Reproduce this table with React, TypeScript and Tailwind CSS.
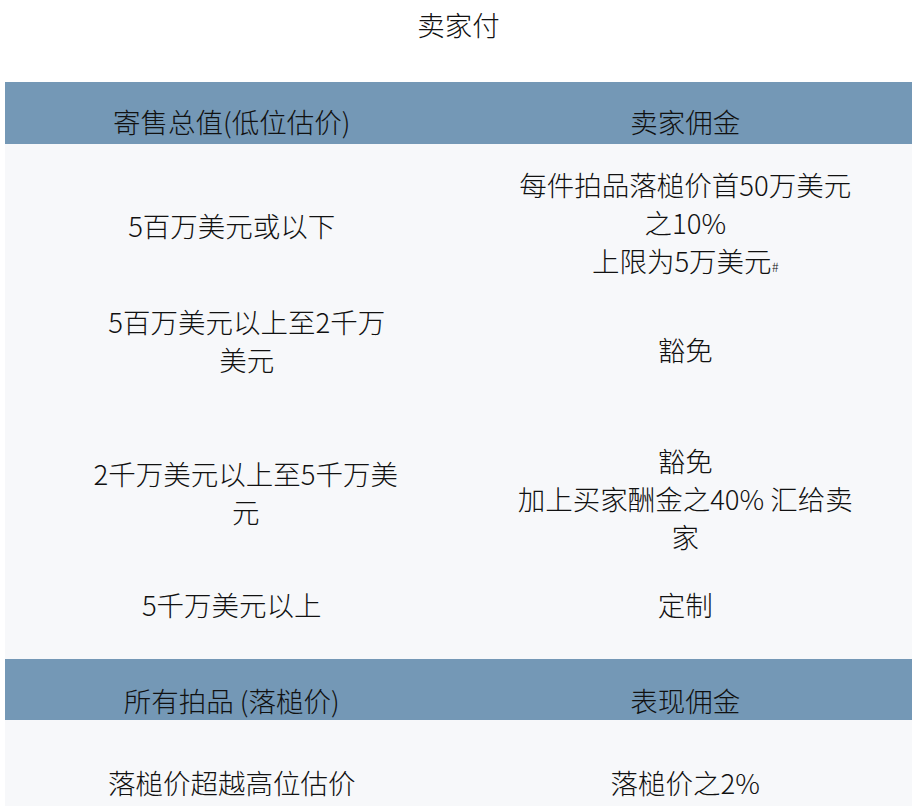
const FONT = "font-['Noto_Sans_CJK_SC','Noto_Sans',sans-serif]";

type Row = {
  h: string;
  leftPt: string;
  rightPt: string;
  left: string[];
  right: string[];
  hashOnLast?: boolean;
};

const ROWS: Row[] = [
  {
    h: "h-[146px]",
    leftPt: "pt-[62px]",
    rightPt: "pt-[21px]",
    left: ["5百万美元或以下"],
    right: ["每件拍品落槌价首50万美元", "之10%", "上限为5万美元"],
    hashOnLast: true,
  },
  {
    h: "h-[131px]",
    leftPt: "pt-[12px] pl-[30px]",
    rightPt: "pt-[40px]",
    left: ["5百万美元以上至2千万", "美元"],
    right: ["豁免"],
  },
  {
    h: "h-[145px]",
    leftPt: "pt-[33px] pl-[28px]",
    rightPt: "pt-[20px]",
    left: ["2千万美元以上至5千万美", "元"],
    right: ["豁免", "加上买家酬金之40% 汇给卖", "家"],
  },
  {
    h: "h-[93px]",
    leftPt: "pt-[19px]",
    rightPt: "pt-[19px]",
    left: ["5千万美元以上"],
    right: ["定制"],
  },
];

function Lines({ lines, hash }: { lines: string[]; hash?: boolean }) {
  return (
    <div className="text-center whitespace-nowrap">
      {lines.map((l, i) => (
        <div key={i}>
          {l}
          {hash && i === lines.length - 1 && <span className="text-[13px] align-baseline">#</span>}
        </div>
      ))}
    </div>
  );
}

function HeaderRow({ left, right, h, pt }: { left: string; right: string; h: string; pt: string }) {
  return (
    <div className={`grid grid-cols-2 bg-[#7498b6] ${h}`}>
      <div className={`${pt} text-center whitespace-nowrap`}>{left}</div>
      <div className={`${pt} text-center whitespace-nowrap`}>{right}</div>
    </div>
  );
}

export default function App() {
  return (
    <div className={`${FONT} min-h-[806px] bg-white text-[27.5px] font-light leading-[38px] text-[#111]`}>
      <div className="pt-[5px] text-center">卖家付</div>

      <div className="mx-[5px] mt-[39px] w-[907px] bg-[#f7f8fa]">
        <HeaderRow left="寄售总值(低位估价)" right="卖家佣金" h="h-[62px]" pt="pt-[20px]" />

        {ROWS.map((r, i) => (
          <div key={i} className={`grid grid-cols-2 ${r.h}`}>
            <div className={r.leftPt}>
              <Lines lines={r.left} />
            </div>
            <div className={r.rightPt}>
              <Lines lines={r.right} hash={r.hashOnLast} />
            </div>
          </div>
        ))}

        <HeaderRow left="所有拍品 (落槌价)" right="表现佣金" h="h-[61px]" pt="pt-[22px]" />

        <div className="grid grid-cols-2 h-[100px]">
          <div className="pt-[43px] text-center whitespace-nowrap">落槌价超越高位估价</div>
          <div className="pt-[43px] text-center whitespace-nowrap">落槌价之2%</div>
        </div>
      </div>
    </div>
  );
}
